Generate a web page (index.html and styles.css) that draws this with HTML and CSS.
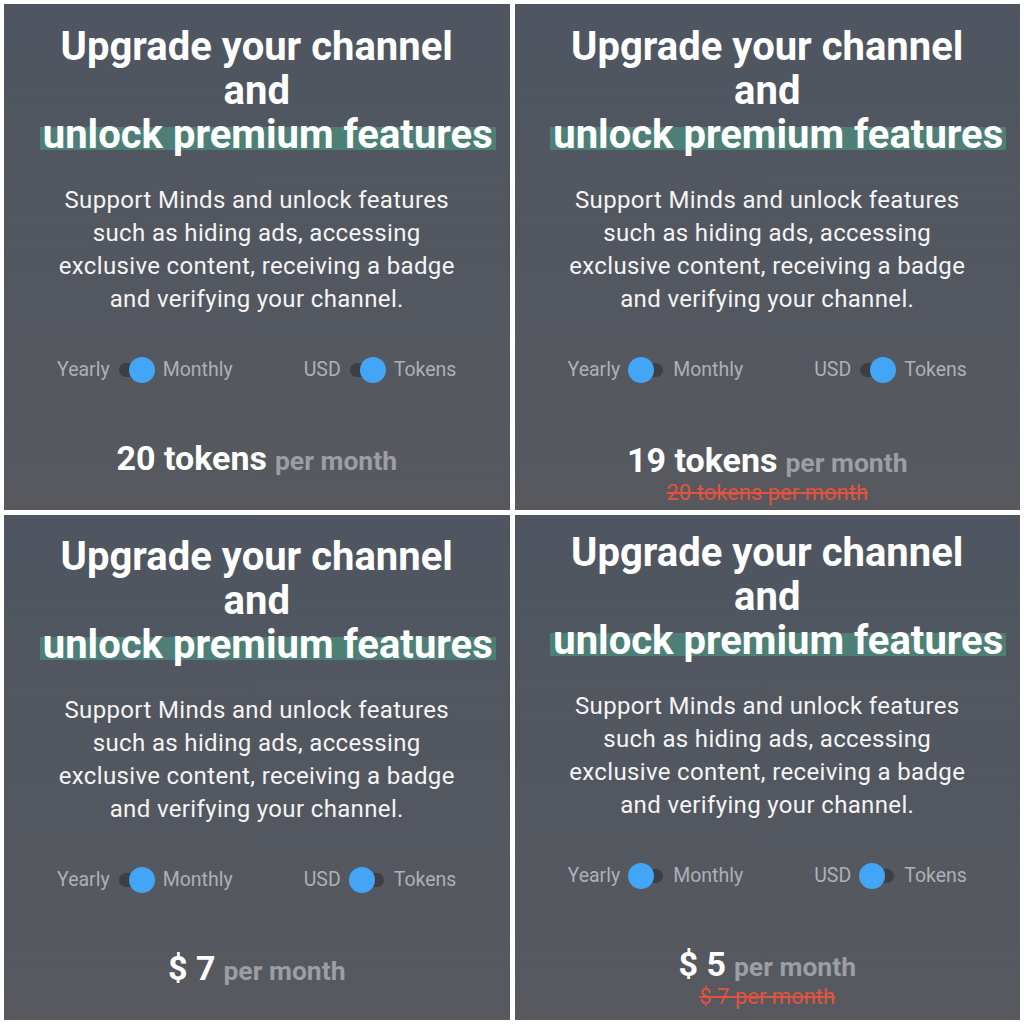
FILE: index.html
```html
<!DOCTYPE html>
<html>
<head>
<meta charset="utf-8">
<link rel="stylesheet" href="styles.css">
</head>
<body>
<div class="grid">
  <section class="panel">
    <h1 class="title">Upgrade your channel<br>and<br><span class="hl">unlock premium features</span></h1>
    <p class="desc">Support Minds and unlock features such as hiding ads, accessing exclusive content, receiving a badge and verifying your channel.</p>
    <div class="toggles">
      <div class="tgroup"><span class="lbl">Yearly</span><span class="switch on"><span class="track"></span><span class="knob"></span></span><span class="lbl">Monthly</span></div>
      <div class="tgroup"><span class="lbl">USD</span><span class="switch on"><span class="track"></span><span class="knob"></span></span><span class="lbl">Tokens</span></div>
    </div>
    <div class="price"><span class="amount">20 tokens</span><span class="per">per month</span></div>
  </section>

  <section class="panel">
    <h1 class="title">Upgrade your channel<br>and<br><span class="hl">unlock premium features</span></h1>
    <p class="desc">Support Minds and unlock features such as hiding ads, accessing exclusive content, receiving a badge and verifying your channel.</p>
    <div class="toggles">
      <div class="tgroup"><span class="lbl">Yearly</span><span class="switch"><span class="track"></span><span class="knob"></span></span><span class="lbl">Monthly</span></div>
      <div class="tgroup"><span class="lbl">USD</span><span class="switch on"><span class="track"></span><span class="knob"></span></span><span class="lbl">Tokens</span></div>
    </div>
    <div class="price price--low"><span class="amount">19 tokens</span><span class="per">per month</span></div>
    <div class="old">20 tokens per month</div>
  </section>

  <section class="panel panel--row2">
    <h1 class="title">Upgrade your channel<br>and<br><span class="hl">unlock premium features</span></h1>
    <p class="desc">Support Minds and unlock features such as hiding ads, accessing exclusive content, receiving a badge and verifying your channel.</p>
    <div class="toggles">
      <div class="tgroup"><span class="lbl">Yearly</span><span class="switch on"><span class="track"></span><span class="knob"></span></span><span class="lbl">Monthly</span></div>
      <div class="tgroup"><span class="lbl">USD</span><span class="switch"><span class="track"></span><span class="knob"></span></span><span class="lbl">Tokens</span></div>
    </div>
    <div class="price"><span class="amount">$ 7</span><span class="per">per month</span></div>
  </section>

  <section class="panel panel--up">
    <h1 class="title">Upgrade your channel<br>and<br><span class="hl">unlock premium features</span></h1>
    <p class="desc">Support Minds and unlock features such as hiding ads, accessing exclusive content, receiving a badge and verifying your channel.</p>
    <div class="toggles">
      <div class="tgroup"><span class="lbl">Yearly</span><span class="switch"><span class="track"></span><span class="knob"></span></span><span class="lbl">Monthly</span></div>
      <div class="tgroup"><span class="lbl">USD</span><span class="switch"><span class="track"></span><span class="knob"></span></span><span class="lbl">Tokens</span></div>
    </div>
    <div class="price"><span class="amount">$ 5</span><span class="per">per month</span></div>
    <div class="old">$ 7 per month</div>
  </section>
</div>
</body>
</html>
```

FILE: styles.css
```css
* { box-sizing: border-box; }
html, body { margin: 0; padding: 0; background: #ffffff; }
body { font-family: Roboto, "Liberation Sans", sans-serif; }

.grid {
  width: 1024px;
  height: 1024px;
  padding: 4px;
  display: grid;
  grid-template-columns: 1fr 1fr;
  grid-template-rows: 1fr 1fr;
  gap: 5px;
}

.panel {
  background: linear-gradient(to bottom, #4f5661 0%, #53575f 55%, #57595f 100%);
  padding-top: 21px;
  text-align: center;
  overflow: hidden;
}
.panel--row2 { padding-top: 20px; }
.panel--up { padding-top: 16px; }

.title {
  margin: 0;
  font-size: 40px;
  line-height: 44px;
  font-weight: 700;
  color: #ffffff;
}
.hl {
  margin-left: 22px;
  padding: 0 3px;
  background: linear-gradient(to bottom, transparent 0%, transparent 34%, #4d7f77 34%, #4d7f77 84%, transparent 84%);
}

.desc {
  margin: 27px auto 0;
  width: 420px;
  font-size: 24px;
  letter-spacing: 0.35px;
  line-height: 33px;
  color: #f4f4f4;
  font-weight: 400;
}

.toggles {
  margin-top: 41px;
  display: flex;
  justify-content: center;
  gap: 71px;
  height: 26px;
  align-items: center;
}
.tgroup {
  display: flex;
  align-items: center;
  gap: 8px;
}
.lbl {
  font-size: 19.5px;
  color: #aeb0b5;
  line-height: 26px;
}
.switch {
  position: relative;
  width: 37px;
  height: 26px;
  display: block;
}
.track {
  position: absolute;
  left: 1px;
  right: 2px;
  top: 6px;
  height: 14px;
  border-radius: 7px;
  background: #3d3f45;
}
.knob {
  position: absolute;
  top: 0;
  left: 0;
  width: 26px;
  height: 26px;
  border-radius: 50%;
  background: #43a5f6;
}
.switch.on .knob { left: 11px; }

.price {
  margin-top: 55px;
  line-height: 40px;
  height: 40px;
  font-weight: 700;
  display: flex;
  justify-content: center;
  align-items: baseline;
  gap: 8px;
}
.price--low { margin-top: 57px; }
.amount {
  font-size: 34px;
  color: #ffffff;
}
.per {
  font-size: 26.5px;
  color: #9c9ea2;
}

.old {
  margin-top: 0;
  font-size: 22px;
  line-height: 26px;
  color: #e0533f;
  text-decoration: line-through;
  text-decoration-thickness: 2px;
}
```
